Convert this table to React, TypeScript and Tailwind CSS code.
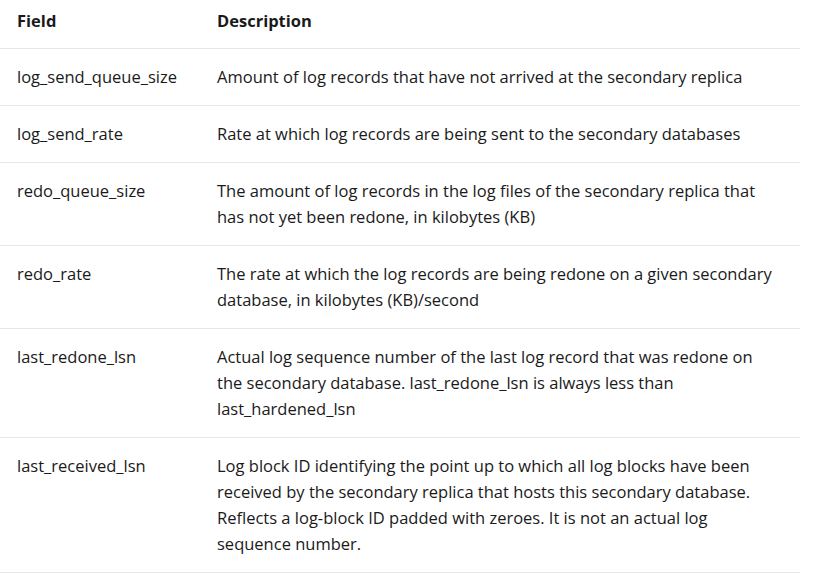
const rows = [
  { field: "log_send_queue_size", desc: ["Amount of log records that have not arrived at the secondary replica"] },
  { field: "log_send_rate", desc: ["Rate at which log records are being sent to the secondary databases"] },
  {
    field: "redo_queue_size",
    desc: [
      "The amount of log records in the log files of the secondary replica that",
      "has not yet been redone, in kilobytes (KB)",
    ],
  },
  {
    field: "redo_rate",
    desc: [
      "The rate at which the log records are being redone on a given secondary",
      "database, in kilobytes (KB)/second",
    ],
  },
  {
    field: "last_redone_lsn",
    desc: [
      "Actual log sequence number of the last log record that was redone on",
      "the secondary database. last_redone_lsn is always less than",
      "last_hardened_lsn",
    ],
  },
  {
    field: "last_received_lsn",
    desc: [
      "Log block ID identifying the point up to which all log blocks have been",
      "received by the secondary replica that hosts this secondary database.",
      "Reflects a log-block ID padded with zeroes. It is not an actual log",
      "sequence number.",
    ],
  },
];

export default function App() {
  return (
    <div className="w-[832px] h-[582px] bg-white overflow-hidden font-['Open_Sans',sans-serif] text-[#1a1a1a]">
      <table className="w-[800px] border-collapse table-fixed text-[16.5px] leading-[26px]">
        <thead>
          <tr className="border-b border-[#e6e6e6]">
            <th className="w-[200px] text-left font-bold pl-[17px] pr-4 pt-[8px] pb-[14px] align-top">Field</th>
            <th className="text-left font-bold pl-[17px] pr-4 pt-[8px] pb-[14px] align-top">Description</th>
          </tr>
        </thead>
        <tbody>
          {rows.map((r) => (
            <tr key={r.field} className="border-b border-[#e6e6e6]">
              <td className="pl-[17px] pr-4 py-[15px] align-top">{r.field}</td>
              <td className="pl-[17px] pr-2 py-[15px] align-top">
                {r.desc.map((line) => (
                  <div key={line} className="whitespace-nowrap">
                    {line}
                  </div>
                ))}
              </td>
            </tr>
          ))}
        </tbody>
      </table>
    </div>
  );
}
